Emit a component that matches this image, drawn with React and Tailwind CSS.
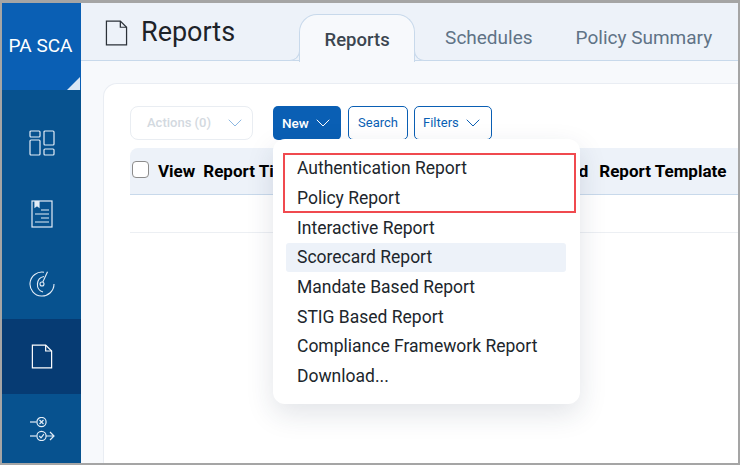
import { ChevronDown } from 'lucide-react'

const menuItems = [
    'Authentication Report',
    'Policy Report',
    'Interactive Report',
    'Scorecard Report',
    'Mandate Based Report',
    'STIG Based Report',
    'Compliance Framework Report',
    'Download...',
]

function PageIcon({ className }) {
    return (
        <svg viewBox="0 0 24 28" fill="none" stroke="currentColor" strokeWidth="1.3" className={className}>
            <path d="M1.5 1.5H16L22.5 8V26.5H1.5Z" />
            <path d="M16 1.5V8H22.5" />
        </svg>
    )
}

function DashboardIcon() {
    return (
        <svg viewBox="0 0 26 26" fill="none" stroke="currentColor" strokeWidth="1.2" className="w-[26px] h-[26px]">
            <rect x="1" y="1" width="10" height="6" rx="1" />
            <rect x="1" y="10" width="10" height="15" rx="1" />
            <rect x="15" y="1" width="10" height="14" rx="1" />
            <rect x="15" y="19" width="10" height="6" rx="1" />
        </svg>
    )
}

function ListIcon() {
    return (
        <svg viewBox="0 0 22 28" fill="none" stroke="currentColor" strokeWidth="1.2" className="w-[22px] h-[28px]">
            <rect x="1" y="1" width="20" height="26" />
            <path d="M4 1V7L6 5.5L8 7V1" fill="currentColor" />
            <path d="M10 10H18M4 14H18M10 18H18M4 22H18" />
        </svg>
    )
}

function GaugeIcon() {
    return (
        <svg viewBox="0 0 26 26" fill="none" stroke="currentColor" strokeWidth="1.1" className="w-[26px] h-[26px]">
            <path d="M15 1.2A12 12 0 1 0 25 13" />
            <path d="M15 5.5A8 8 0 0 0 14 21" />
            <circle cx="13" cy="13" r="2" />
            <path d="M13.8 11L18.5 0.8" />
        </svg>
    )
}

function RulesIcon() {
    return (
        <svg viewBox="0 0 26 24" fill="none" stroke="currentColor" strokeWidth="1.2" className="w-[26px] h-[24px]">
            <path d="M1 5H7.5" />
            <circle cx="12.5" cy="5" r="4.6" />
            <path d="M10.5 3L14.5 7M14.5 3L10.5 7" />
            <path d="M1 19H7.5" />
            <circle cx="12.5" cy="19" r="4.6" />
            <path d="M10.3 19L12 20.8L14.9 17.2" />
            <path d="M17 19H25M21 15L25 19L21 23" />
        </svg>
    )
}

function Sidebar() {
    return (
        <aside className="w-[79px] shrink-0 bg-[#07528f] text-[#e4edf7] flex flex-col">
            <div className="relative h-[87px] bg-[#0a5fb4] flex items-center justify-center pr-[2px] text-white text-[19px] whitespace-nowrap">
                PA SCA
                <svg viewBox="0 0 13 13" className="absolute right-[1px] bottom-0 w-[13px] h-[13px]">
                    <path d="M13 0V13H0Z" fill="#dbe7f4" />
                </svg>
            </div>
            <div className="pt-[17px] flex flex-col">
                <div className="h-[71px] flex items-center justify-center"><DashboardIcon /></div>
                <div className="h-[71px] flex items-center justify-center"><ListIcon /></div>
                <div className="h-[70px] flex items-center justify-center"><GaugeIcon /></div>
                <div className="h-[75px] flex items-center justify-center bg-[#063b73] text-white">
                    <PageIcon className="w-[22px] h-[27px]" />
                </div>
                <div className="h-[69px] flex items-center justify-center"><RulesIcon /></div>
            </div>
        </aside>
    )
}

function Header() {
    return (
        <header className="h-[58px] shrink-0 bg-[#edf2f9] border-b border-[#c8d9eb] flex items-start pl-[24px]">
            <PageIcon className="w-[23px] h-[28px] mt-[16px] text-[#2b3138]" />
            <h1 className="ml-[13px] mt-[9px] text-[27px] leading-[40px] text-[#1d2329]">Reports</h1>
            <div className="relative ml-[64px] mt-[11px] w-[116px] h-[48px] bg-[#f7f9fc] border border-b-0 border-[#c8d9eb] rounded-t-[18px] flex items-center justify-center pt-[4px] text-[18.5px] font-medium text-[#3c4650]">
                Reports
                <span className="absolute -left-[10px] bottom-[1px] w-[10px] h-[10px] border-r border-b border-[#c8d9eb] rounded-br-[10px] bg-[#edf2f9]" />
                <span className="absolute -right-[10px] bottom-[1px] w-[10px] h-[10px] border-l border-b border-[#c8d9eb] rounded-bl-[10px] bg-[#edf2f9]" />
            </div>
            <span className="ml-[30px] mt-[20px] text-[19px] leading-[30px] text-[#5f7386]">Schedules</span>
            <span className="ml-[43px] mt-[20px] text-[19px] leading-[30px] text-[#5f7386] whitespace-nowrap">Policy Summary</span>
        </header>
    )
}

function Toolbar() {
    return (
        <div className="flex h-[34px] text-[13px] font-medium">
            <button className="w-[123px] flex items-center pl-[16px] border border-[#e9edf2] rounded-lg text-[#d3d9e0]">
                Actions (0)
                <ChevronDown size={24} strokeWidth={1} className="ml-[12px] text-[#8db8e2]" />
            </button>
            <button className="ml-[20px] w-[68px] flex items-center pl-[9px] bg-[#0a5fb4] rounded-[5px] text-white text-[13.5px]">
                New
                <ChevronDown size={24} strokeWidth={1} className="ml-[2px]" />
            </button>
            <button className="ml-[7px] w-[60px] flex items-center justify-center border border-[#0a5fb4] rounded-[5px] text-[#0a5fb4] font-normal">
                Search
            </button>
            <button className="ml-[6px] w-[78px] flex items-center pl-[8px] border border-[#0a5fb4] rounded-[5px] text-[#0a5fb4] font-normal">
                Filters
                <ChevronDown size={24} strokeWidth={1} className="ml-[2px]" />
            </button>
        </div>
    )
}

function DropdownMenu() {
    return (
        <div className="absolute left-[169px] top-[55px] w-[307px] h-[265px] pt-[14.5px] bg-white rounded-[12px] shadow-[0_10px_28px_rgba(30,50,80,0.13)] z-10 text-[17.5px] text-[#20262c]">
            {menuItems.map((item) => (
                <div
                    key={item}
                    className={item === 'Scorecard Report'
                        ? 'h-[29.7px] ml-[13px] mr-[14px] px-[11px] flex items-center bg-[#edf2f9] rounded-[3px]'
                        : 'h-[29.7px] ml-[13px] mr-[14px] px-[11px] flex items-center'}
                >
                    {item}
                </div>
            ))}
            <div className="absolute left-[10px] top-[14px] w-[293px] h-[60px] border-2 border-[#f04a4f]" />
        </div>
    )
}

function ReportsTable() {
    return (
        <div className="mt-[8px] text-[17px] font-bold text-black">
            <div className="h-[47px] flex items-center pl-[2px] pt-[2px] bg-[#edf2f9] border-b border-[#c8d9eb] rounded-tl-[8px] whitespace-nowrap">
                <span className="w-[17px] h-[17px] -mt-[6px] border-[1.5px] border-[#8c8c8c] rounded-[4px] bg-white" />
                <span className="ml-[9px]">View</span>
                <span className="ml-[8px] w-[385px]">Report Title</span>
                <span className="w-0 flex justify-end">Created</span>
                <span className="ml-[11px]">Report Template</span>
            </div>
            <div className="h-[38px] border-b border-[#eceff3]" />
        </div>
    )
}

export default function App() {
    return (
        <div className="w-[740px] h-[465px] overflow-hidden border-2 border-t-[3px] border-[#a5a5a5] flex bg-[#f7f9fc] font-['Roboto',sans-serif]">
            <Sidebar />
            <main className="flex-1 min-w-0 flex flex-col">
                <Header />
                <div className="flex-1 pl-[22px] pt-[22px]">
                    <div className="relative h-full bg-white border-l border-t border-[#e9edf3] rounded-tl-[14px] pl-[26px] pt-[22px]">
                        <Toolbar />
                        <ReportsTable />
                        <DropdownMenu />
                    </div>
                </div>
            </main>
        </div>
    )
}
